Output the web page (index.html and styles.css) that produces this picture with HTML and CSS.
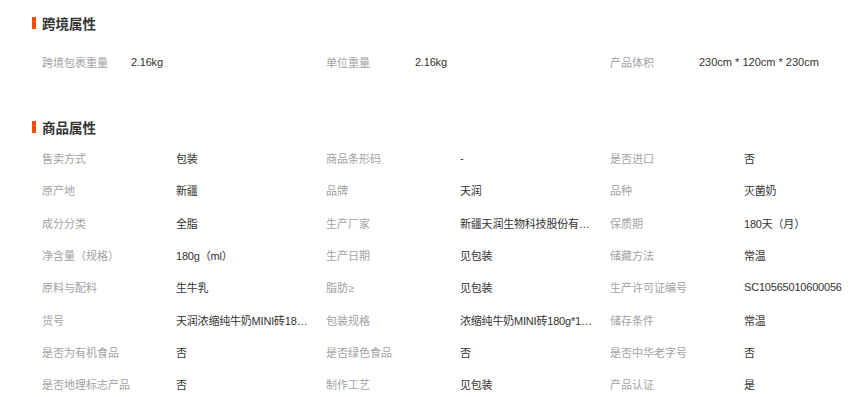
FILE: index.html
```html
<!DOCTYPE html>
<html lang="zh">
<head>
<meta charset="utf-8">
<link rel="stylesheet" href="styles.css">
</head>
<body>
<section class="attr-section cross">
  <h3 class="title">跨境属性</h3>
  <div class="grid">
    <div class="cell"><span class="label">跨境包裹重量</span><span class="value">2.16kg</span></div>
    <div class="cell"><span class="label">单位重量</span><span class="value">2.16kg</span></div>
    <div class="cell"><span class="label">产品体积</span><span class="value wide">230cm * 120cm * 230cm</span></div>
  </div>
</section>
<section class="attr-section goods">
  <h3 class="title">商品属性</h3>
  <div class="grid">
    <div class="cell"><span class="label">售卖方式</span><span class="value">包装</span></div>
    <div class="cell"><span class="label">商品条形码</span><span class="value">-</span></div>
    <div class="cell"><span class="label">是否进口</span><span class="value">否</span></div>

    <div class="cell"><span class="label">原产地</span><span class="value">新疆</span></div>
    <div class="cell"><span class="label">品牌</span><span class="value">天润</span></div>
    <div class="cell"><span class="label">品种</span><span class="value">灭菌奶</span></div>

    <div class="cell"><span class="label">成分分类</span><span class="value">全脂</span></div>
    <div class="cell"><span class="label">生产厂家</span><span class="value">新疆天润生物科技股份有限公司</span></div>
    <div class="cell"><span class="label">保质期</span><span class="value">180天（月）</span></div>

    <div class="cell"><span class="label">净含量（规格）</span><span class="value">180g（ml）</span></div>
    <div class="cell"><span class="label">生产日期</span><span class="value">见包装</span></div>
    <div class="cell"><span class="label">储藏方法</span><span class="value">常温</span></div>

    <div class="cell"><span class="label">原料与配料</span><span class="value">生牛乳</span></div>
    <div class="cell"><span class="label">脂肪≥</span><span class="value">见包装</span></div>
    <div class="cell"><span class="label">生产许可证编号</span><span class="value">SC10565010600056</span></div>

    <div class="cell"><span class="label">货号</span><span class="value">天润浓缩纯牛奶MINI砖180g*12盒</span></div>
    <div class="cell"><span class="label">包装规格</span><span class="value">浓缩纯牛奶MINI砖180g*12盒</span></div>
    <div class="cell"><span class="label">储存条件</span><span class="value">常温</span></div>

    <div class="cell"><span class="label">是否为有机食品</span><span class="value">否</span></div>
    <div class="cell"><span class="label">是否绿色食品</span><span class="value">否</span></div>
    <div class="cell"><span class="label">是否中华老字号</span><span class="value">否</span></div>

    <div class="cell"><span class="label">是否地理标志产品</span><span class="value">否</span></div>
    <div class="cell"><span class="label">制作工艺</span><span class="value">见包装</span></div>
    <div class="cell"><span class="label">产品认证</span><span class="value">是</span></div>
  </div>
</section>
</body>
</html>
```
FILE: styles.css
```css
html, body {
  margin: 0;
  padding: 0;
  background: #fff;
}
body {
  font-family: "Liberation Sans", "Noto Sans CJK SC", sans-serif;
  font-size: 11px;
  color: #333;
  padding-left: 32px;
}
.attr-section {
  display: flex;
  flex-direction: column;
}
.title {
  margin: 0;
  display: flex;
  align-items: center;
  height: 20px;
  font-size: 13.5px;
  font-weight: bold;
  color: #333;
  font-family: "Noto Sans CJK SC", sans-serif;
}
.title::before {
  content: "";
  width: 4px;
  height: 12px;
  background: #ff4a00;
  margin-right: 6px;
}
.cross {
  padding-top: 13px;
}
.cross .title {
  margin-bottom: 13px;
}
.goods {
  padding-top: 39px;
}
.goods .title {
  margin-bottom: 5px;
}
.grid {
  display: grid;
  grid-template-columns: repeat(3, 284px);
}
.cell {
  display: flex;
  align-items: center;
  padding-left: 10px;
  white-space: nowrap;
}
.cross .cell {
  height: 32px;
}
.goods .cell {
  height: 32.3px;
}
.label {
  color: #a3a3a3;
  flex: none;
}
.cross .label {
  width: 89px;
}
.goods .label {
  width: 134px;
}
.value {
  color: #333;
  width: 134px;
  overflow: hidden;
  text-overflow: ellipsis;
  letter-spacing: -0.2px;
}
.value.wide {
  width: auto;
  overflow: visible;
  letter-spacing: 0;
}
```
